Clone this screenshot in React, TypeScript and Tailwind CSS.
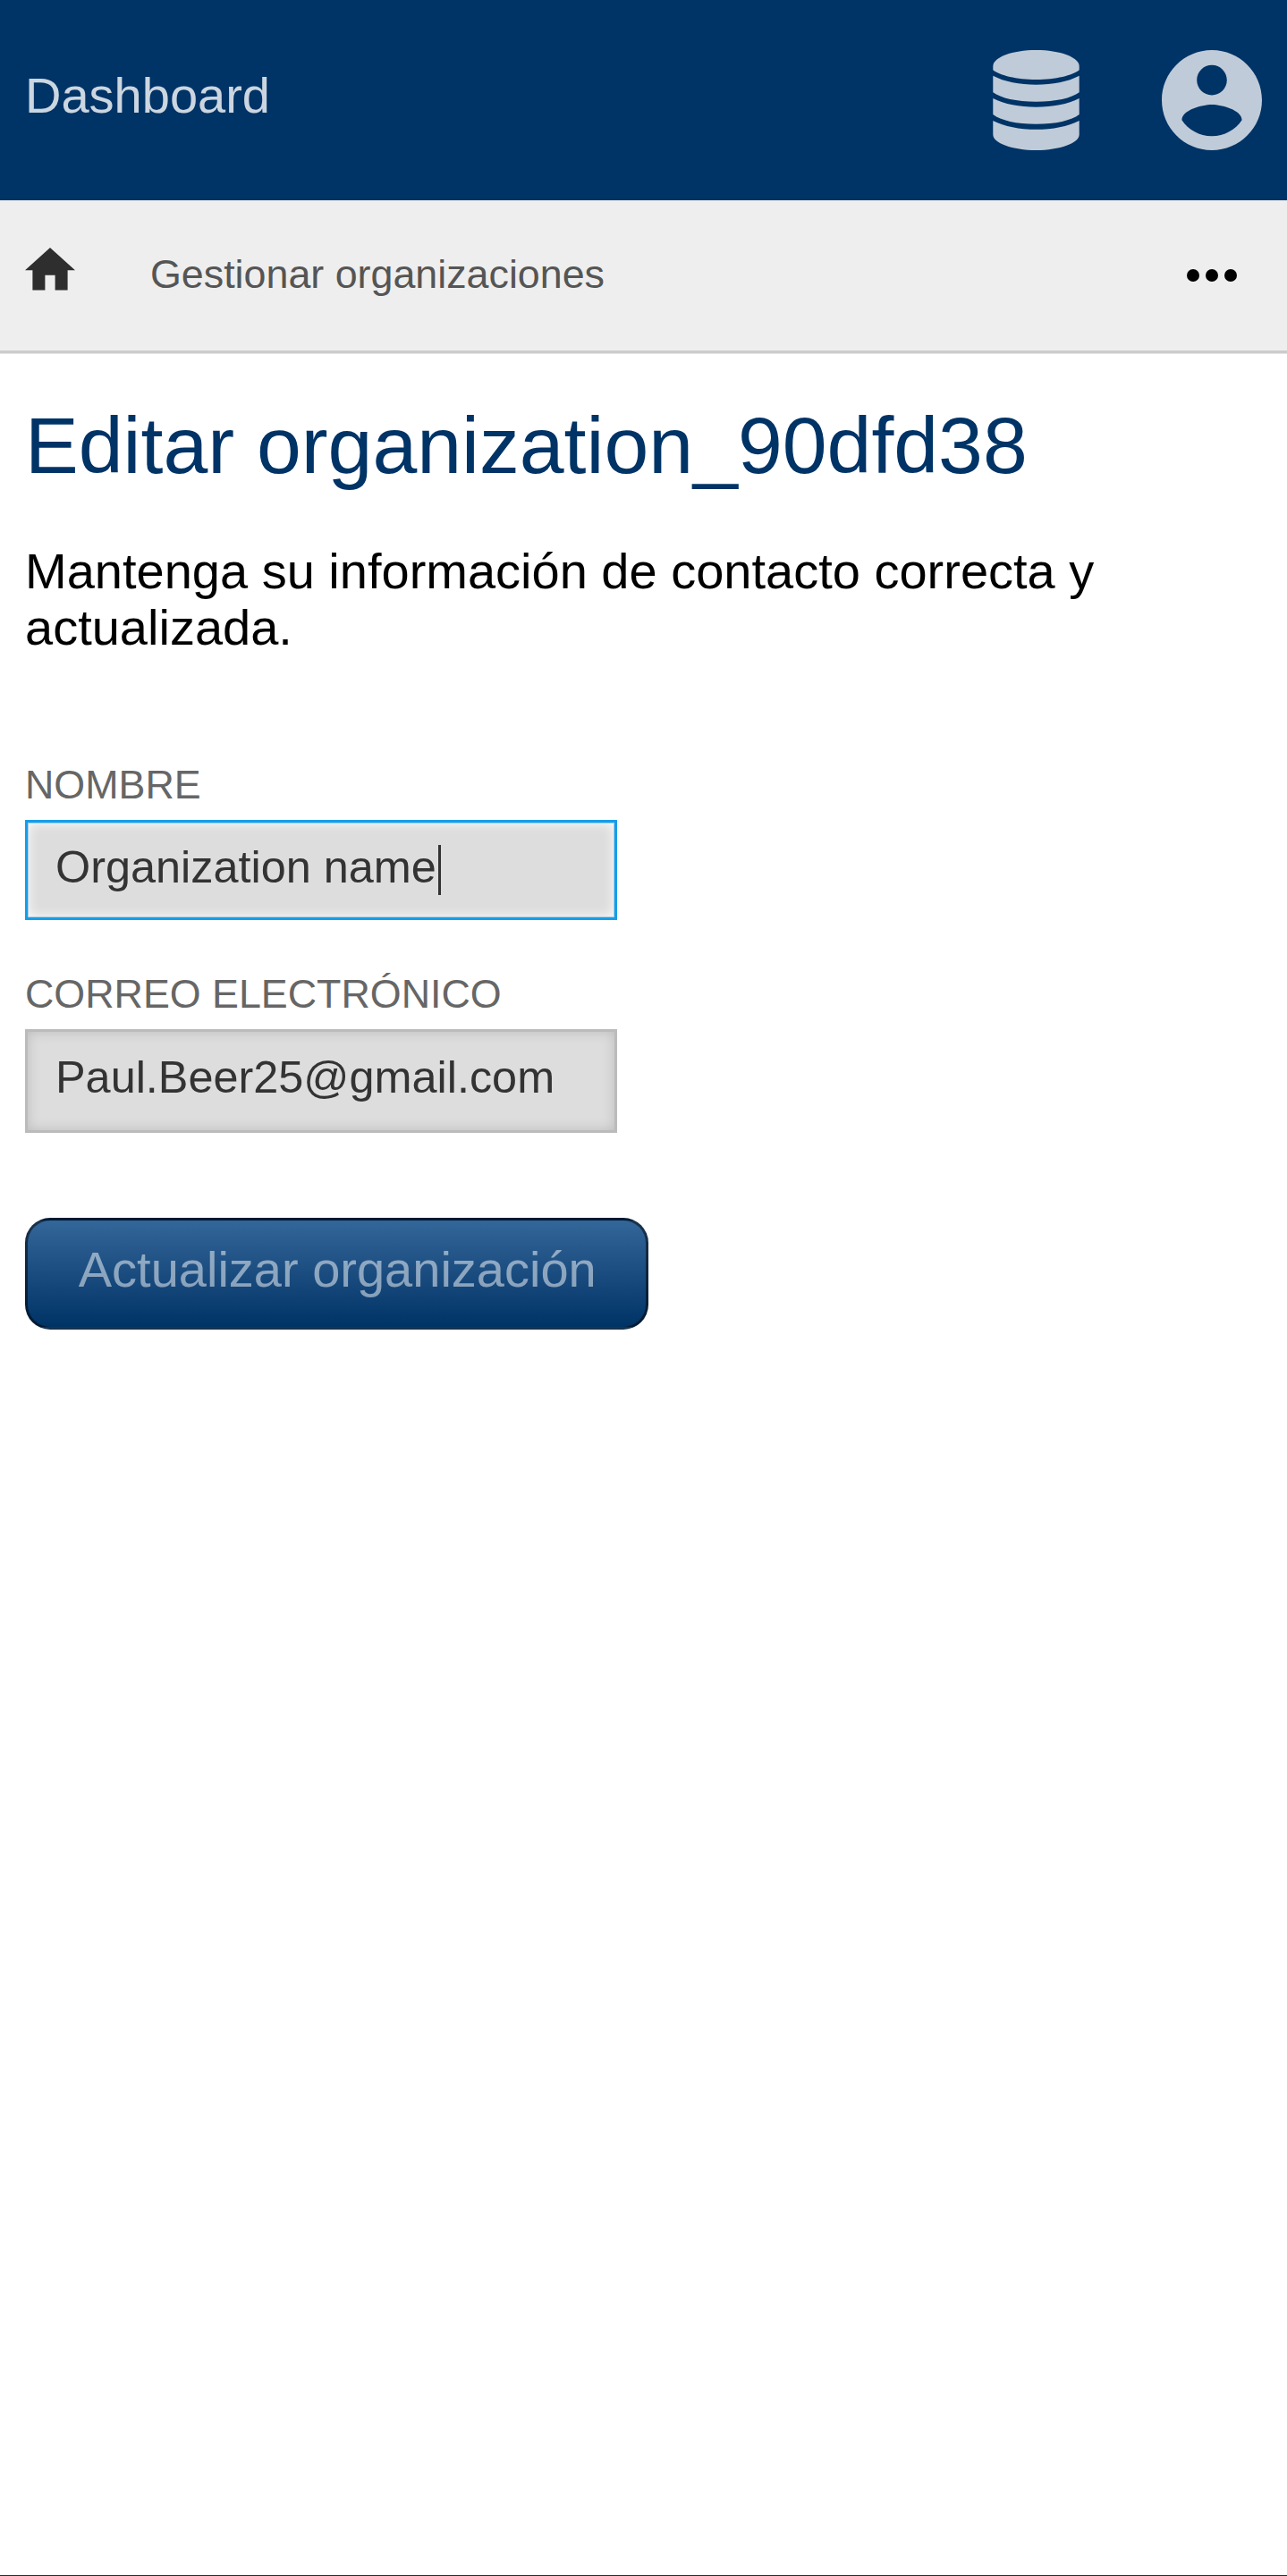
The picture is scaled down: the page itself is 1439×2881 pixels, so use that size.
const DatabaseIcon = () => (
  <svg className="h-28 w-[97px]" viewBox="0 0 97 112" fill="currentColor">
    <path d="M0.3 18C0.3 8 21.900 0 48.500 0S96.700 8 96.700 18V22.300C89 28.500 70.500 33 48.500 33S8.100 28.500 0.300 22.300Z" />
    <path d="M0.300 28.800C13 35.500 30 38.700 48.500 38.700S84 35.500 96.700 28.800V47.300C88 53.800 70.500 57.700 48.500 57.700S9 53.800 0.300 47.300Z" />
    <path d="M0.300 54C13 60.500 30 63.700 48.500 63.700S84 60.500 96.700 54V72C88 78.700 70.500 82.800 48.500 82.800S9 78.700 0.300 72Z" />
    <path d="M0.300 79C13 85.500 30 88.800 48.500 88.800S84 85.500 96.700 79V94.500C96.700 104 75.100 112 48.500 112S0.300 104 0.300 94.500Z" />
  </svg>
);

const AccountIcon = () => (
  <svg className="h-28 w-28" viewBox="2 2 20 20" fill="currentColor">
    <path d="M12 2C6.480 2 2 6.480 2 12s4.480 10 10 10 10-4.480 10-10S17.520 2 12 2zm0 3c1.660 0 3 1.340 3 3s-1.340 3-3 3-3-1.340-3-3 1.340-3 3-3zm0 14.200c-2.500 0-4.710-1.280-6-3.220.030-1.990 4-3.080 6-3.080 1.990 0 5.970 1.090 6 3.080-1.290 1.940-3.500 3.220-6 3.220z" />
  </svg>
);

const HomeIcon = () => (
  <svg className="mb-[14px] h-[47.6px] w-14 text-[#2e2e2e]" viewBox="2 3 20 17" fill="currentColor">
    <path d="M10 20v-6h4v6h5v-8h3L12 3 2 12h3v8z" />
  </svg>
);

const MoreIcon = () => (
  <svg className="h-[14px] w-14" viewBox="0 0 56 14" fill="#000">
    <circle cx="7" cy="7" r="7" />
    <circle cx="28" cy="7" r="7" />
    <circle cx="49" cy="7" r="7" />
  </svg>
);

export default function App() {
  return (
    <div className="flex min-h-screen flex-col bg-white font-['Liberation_Sans',sans-serif] text-black">
      <header className="flex h-56 shrink-0 items-center justify-between bg-[#003366] px-7">
        <a className="pb-[11px] text-[56px] leading-[64px] text-white/80">Dashboard</a>
        <div className="flex items-center gap-[92px] text-white/75">
          <DatabaseIcon />
          <AccountIcon />
        </div>
      </header>

      <nav className="flex h-[171px] shrink-0 items-center border-b-[3px] border-[#ccc] bg-[#eee] pr-14 pl-7 shadow-[0_1px_0_#e6e6e6]">
        <HomeIcon />
        <span className="ml-21 pb-[5px] text-[44.8px] leading-[52px] text-[#555]">Gestionar organizaciones</span>
        <div className="ml-auto">
          <MoreIcon />
        </div>
      </nav>

      <main className="grow px-7">
        <h1 className="mt-[51px] text-[89.6px] leading-[104px] text-[#003366]">Editar organization_90dfd38</h1>
        <p className="mt-[57px] text-[56px] leading-[63px]">Mantenga su información de contacto correcta y actualizada.</p>

        <form className="flex flex-col items-start">
          <label className="mt-[118px] text-[44.8px] leading-[52px] text-[#666]">NOMBRE</label>
          <div className="mt-[14px] flex h-28 w-[662px] items-center border-[3px] border-[#149ee9] bg-[#ddd] pb-[7px] pl-[31px] text-[50.4px] leading-14 text-[#333] shadow-[inset_0_0_0_1px_#a8cfe6,inset_0_0_14px_#fff]">
            Organization name
            <span className="mt-[7px] ml-[2px] h-14 w-[3.5px] bg-[#333]" />
          </div>

          <label className="mt-14 text-[44.8px] leading-[52px] text-[#666]">CORREO ELECTRÓNICO</label>
          <div className="mt-[14px] flex h-[116px] w-[662px] items-center border-[3px] border-[#bbb] bg-[#ddd] pb-[9px] pl-[31px] text-[50.4px] leading-14 text-[#333] shadow-[inset_0_0_14px_#bbb]">
            Paul.Beer25@gmail.com
          </div>

          <button
            type="button"
            className="mt-[94.5px] flex h-[125.5px] w-[696.5px] items-center justify-center rounded-[28px] border-[3px] border-black/50 bg-linear-to-b from-[#336699] to-[#003366] pb-[9px] pl-[2px] text-[56px] leading-16 text-white/50"
          >
            Actualizar organización
          </button>
        </form>
      </main>

      <footer className="h-px bg-[#003366]" />
    </div>
  );
}
